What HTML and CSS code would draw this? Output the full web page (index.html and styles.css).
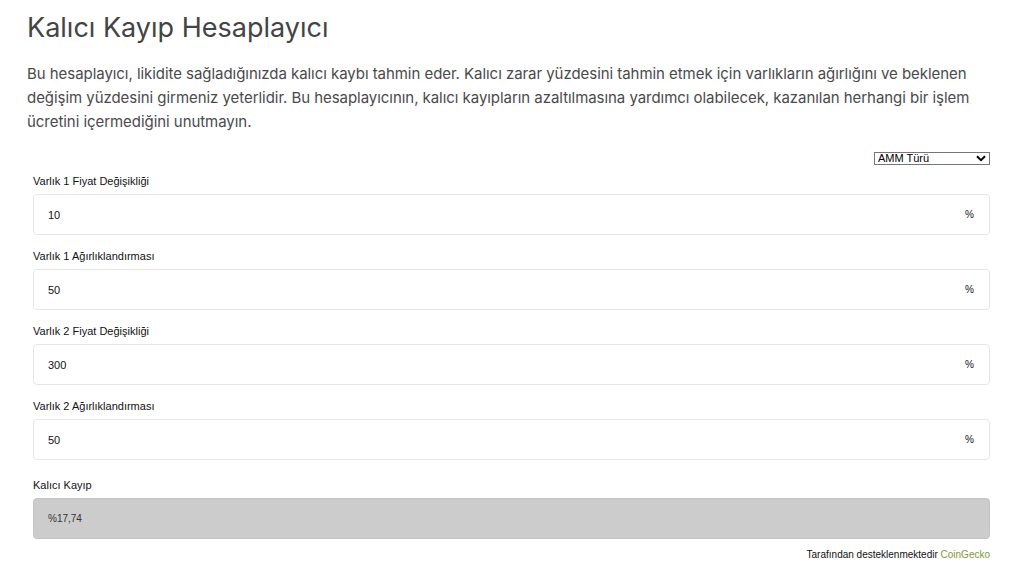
FILE: index.html
```html
<!DOCTYPE html>
<html lang="tr">
<head>
    <meta charset="UTF-8">
    <meta name="viewport" content="width=device-width, initial-scale=1.0">
    <title>Kalıcı Kayıp Hesaplayıcı</title>
    <link rel="stylesheet" href="styles.css">
</head>
<body>
    <div class="page">
        <h1>Kalıcı Kayıp Hesaplayıcı</h1>
        <p class="intro">Bu hesaplayıcı, likidite sağladığınızda kalıcı kaybı tahmin eder. Kalıcı zarar yüzdesini tahmin etmek için varlıkların ağırlığını ve beklenen değişim yüzdesini girmeniz yeterlidir. Bu hesaplayıcının, kalıcı kayıpların azaltılmasına yardımcı olabilecek, kazanılan herhangi bir işlem ücretini içermediğini unutmayın.</p>

        <div class="calc">
            <div class="calc-top">
                <div class="select-wrap">
                    <select id="amm-type">
                        <option>AMM Türü</option>
                        <option>Uniswap</option>
                        <option>Balancer</option>
                    </select>
                    <svg class="chevron" width="10" height="7" viewBox="0 0 10 7"><path d="M1 1.2 5 5.2 9 1.2" fill="none" stroke="#000" stroke-width="2"/></svg>
                </div>
            </div>

            <div class="field">
                <label for="a1-change">Varlık 1 Fiyat Değişikliği</label>
                <div class="box">
                    <input type="text" id="a1-change" value="10">
                    <span class="unit">%</span>
                </div>
            </div>
            <div class="field">
                <label for="a1-weight">Varlık 1 Ağırlıklandırması</label>
                <div class="box">
                    <input type="text" id="a1-weight" value="50">
                    <span class="unit">%</span>
                </div>
            </div>
            <div class="field">
                <label for="a2-change">Varlık 2 Fiyat Değişikliği</label>
                <div class="box">
                    <input type="text" id="a2-change" value="300">
                    <span class="unit">%</span>
                </div>
            </div>
            <div class="field">
                <label for="a2-weight">Varlık 2 Ağırlıklandırması</label>
                <div class="box">
                    <input type="text" id="a2-weight" value="50">
                    <span class="unit">%</span>
                </div>
            </div>
            <div class="field field-result">
                <label>Kalıcı Kayıp</label>
                <div class="box result" id="result">%17,74</div>
            </div>

            <div class="powered">Tarafından desteklenmektedir <a href="#">CoinGecko</a></div>
        </div>
    </div>

    <script>
        // kalıcı kayıp hesabı (ağırlıklı havuz)
        function calc() {
            const c1 = parseFloat(document.getElementById('a1-change').value) || 0;
            const w1 = (parseFloat(document.getElementById('a1-weight').value) || 0) / 100;
            const c2 = parseFloat(document.getElementById('a2-change').value) || 0;
            const w2 = (parseFloat(document.getElementById('a2-weight').value) || 0) / 100;
            const r1 = 1 + c1 / 100;
            const r2 = 1 + c2 / 100;
            const pool = Math.pow(r1, w1) * Math.pow(r2, w2);
            const hold = r1 * w1 + r2 * w2;
            const loss = (1 - pool / hold) * 100;
            document.getElementById('result').textContent = '%' + loss.toFixed(2).replace('.', ',');
        }
        document.querySelectorAll('.box input').forEach(el => el.addEventListener('input', calc));
    </script>
</body>
</html>
```

FILE: styles.css
```css
body {
    margin: 0;
    font-family: Inter, "Liberation Sans", Arial, sans-serif;
    color: #4a4a4a;
    background: #fff;
}
.page {
    padding: 0 20px 0 27px;
}
h1 {
    margin: 0;
    padding-top: 10px;
    font-size: 27px;
    font-weight: 400;
    line-height: 36px;
    color: #444;
}
.intro {
    margin: 16px 0 0;
    font-size: 15px;
    letter-spacing: -0.05px;
    line-height: 24px;
    color: #4a4a4a;
}
.calc {
    margin: 18px 0 0;
    padding: 0 6px;
    font-family: "Liberation Sans", Arial, sans-serif;
    font-size: 11px;
    color: #111;
}
.calc-top {
    display: flex;
    justify-content: flex-end;
}
.select-wrap {
    position: relative;
    width: 116px;
}
.select-wrap select {
    appearance: none;
    width: 100%;
    height: 13px;
    margin: 0;
    padding: 0 0 0 3px;
    border: 1px solid #767676;
    border-radius: 0;
    background: #fff;
    font-family: "Liberation Sans", Arial, sans-serif;
    font-size: 11px;
    line-height: 11px;
    color: #000;
    box-sizing: border-box;
}
.chevron {
    position: absolute;
    right: 4px;
    top: 3px;
    pointer-events: none;
}
.field {
    margin-top: 9px;
}
.field + .field {
    margin-top: 14px;
}
.field + .field-result {
    margin-top: 18px;
}
.field label {
    display: block;
    margin-bottom: 6px;
    font-size: 11px;
    line-height: 14px;
    color: #111;
}
.box {
    display: flex;
    align-items: center;
    height: 41px;
    padding: 0 14px;
    border: 1px solid #e6e6e6;
    border-radius: 4px;
    box-sizing: border-box;
}
.box input {
    flex: 1;
    border: none;
    outline: none;
    padding: 0;
    font-family: "Liberation Sans", Arial, sans-serif;
    font-size: 11px;
    color: #111;
    background: transparent;
}
.unit {
    margin-right: 1px;
    font-size: 10px;
}
.result {
    background: #cccccc;
    border-color: #c4c4c4;
    color: #333;
    font-size: 10px;
}
.powered {
    margin-top: 9px;
    text-align: right;
    font-size: 10px;
    line-height: 14px;
    color: #111;
}
.powered a {
    color: #7d9a32;
    text-decoration: none;
}
```
